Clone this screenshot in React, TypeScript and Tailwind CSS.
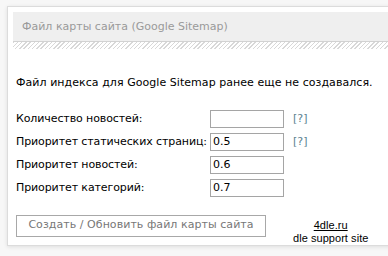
import React from 'react';

const rows = [
  { label: 'Количество новостей:', value: '', help: true },
  { label: 'Приоритет статических страниц:', value: '0.5', help: true },
  { label: 'Приоритет новостей:', value: '0.6', help: false },
  { label: 'Приоритет категорий:', value: '0.7', help: false },
];

export default function App() {
  return (
    <div className="w-[388px] h-[256px] overflow-hidden bg-[#f7f7f7] pt-[6px] pl-[7px] font-['DejaVu_Sans',sans-serif]">
      <div className="w-[400px] h-[240px] bg-white border border-[#dcdcdc] shadow-[0_1px_4px_rgba(0,0,0,0.10)] p-[5px]">
        {/* header */}
        <div className="h-[30px] bg-[#efefef] border-b border-[#d2d2d2] flex items-center pl-[9px] pt-[1px] text-[11px] text-[#9a9a9a]">
          Файл карты сайта (Google Sitemap)
        </div>
        <div className="h-[7px] bg-[repeating-linear-gradient(135deg,#d8d8d8_0px,#d8d8d8_1px,#ffffff_1px,#ffffff_3px)]" />

        <div className="pl-[3px] text-[11px] text-black tracking-[0.05px]">
          <div className="mt-[26px]">Файл индекса для Google Sitemap ранее еще не создавался.</div>

          <div className="mt-[18px] flex flex-col gap-[4px]">
            {rows.map((r) => (
              <div key={r.label} className="flex items-center h-[19px]">
                <div className="w-[194px] whitespace-nowrap tracking-[-0.1px]">{r.label}</div>
                <div className="w-[74px] h-[18px] border border-[#a5a5a5] px-[2px] text-[11px] leading-[16px]">{r.value}</div>
                {r.help && <span className="ml-[9px] text-[#5b8290]">[?]</span>}
              </div>
            ))}
          </div>

          <div className="mt-[17px] flex items-start">
            <div className="w-[250px] h-[22px] border border-[#a8a8a8] flex items-center justify-center text-[11px] text-[#777777]">
              Создать / Обновить файл карты сайта
            </div>
            <div className="ml-[27px] mt-[4px] flex flex-col items-center text-[11px] leading-[13px] font-['Liberation_Sans',sans-serif]">
              <span className="underline">4dle.ru</span>
              <span>dle support site</span>
            </div>
          </div>
        </div>
      </div>
    </div>
  );
}
